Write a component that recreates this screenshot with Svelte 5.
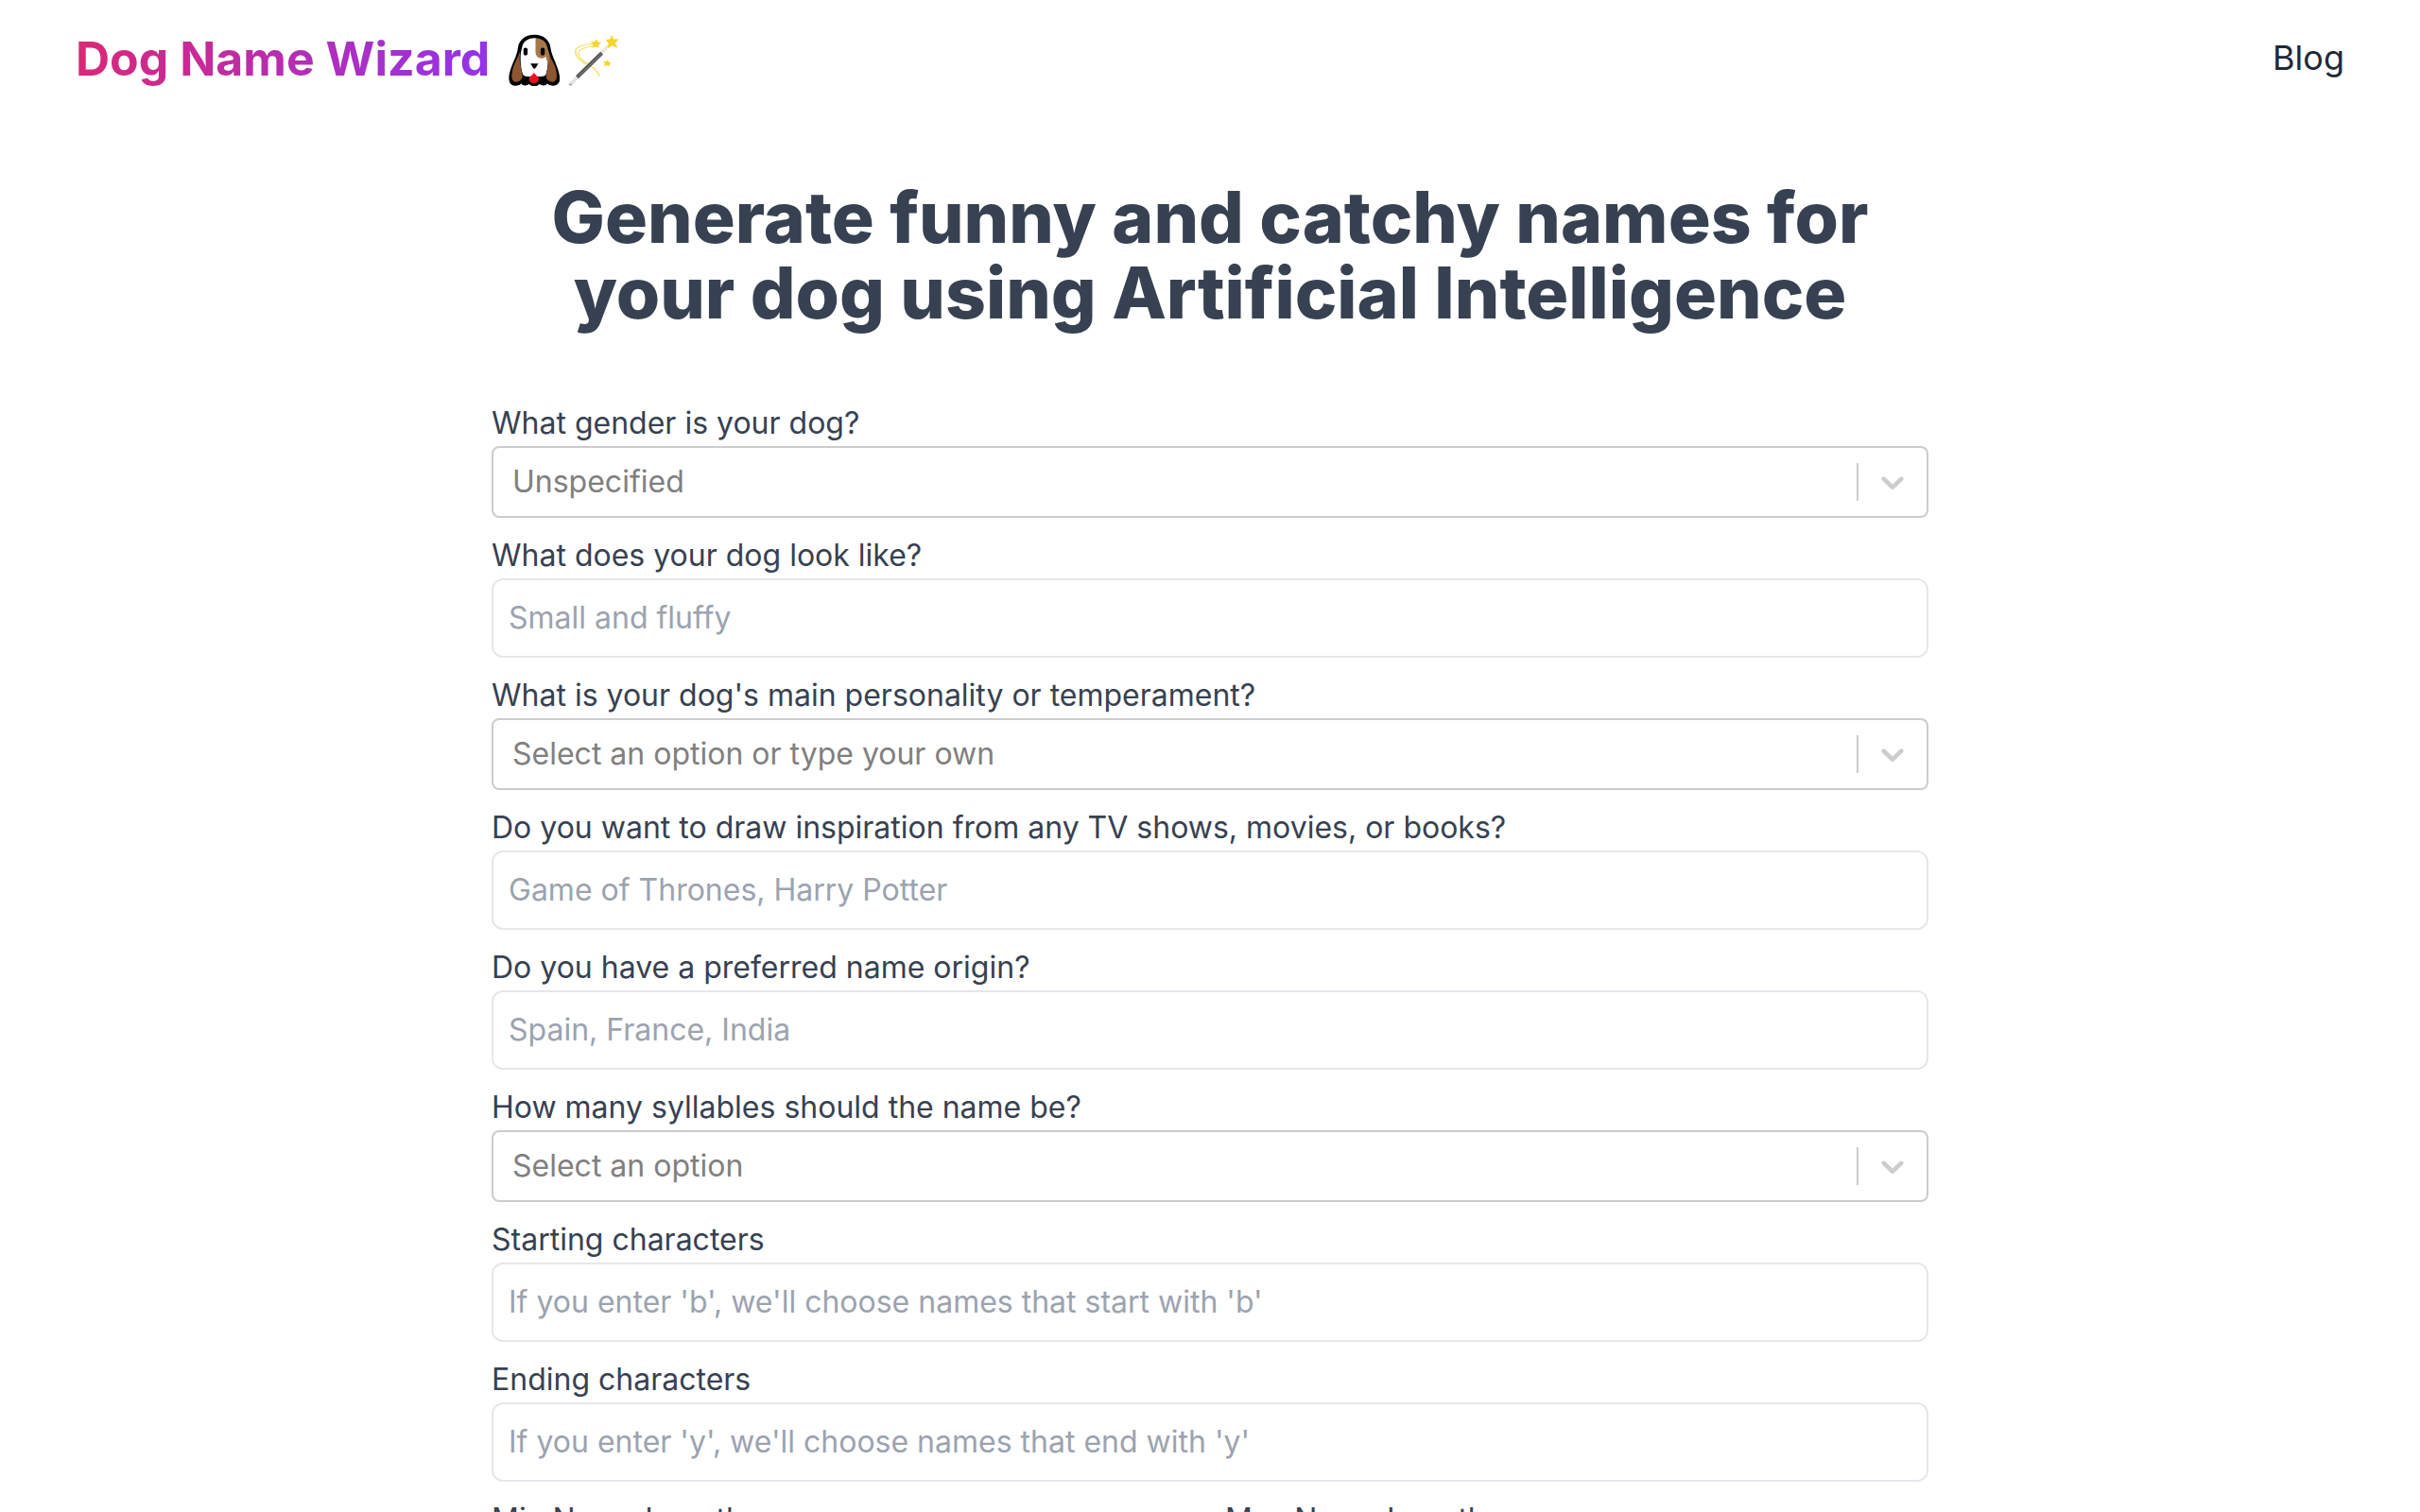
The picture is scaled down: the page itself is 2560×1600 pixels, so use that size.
<script lang="ts">
  type Field = {
    id: string;
    label: string;
    kind: 'select' | 'combo' | 'text';
    placeholder: string;
    options?: string[];
  };

  const fields: Field[] = [
    {
      id: 'gender',
      label: 'What gender is your dog?',
      kind: 'select',
      placeholder: 'Unspecified',
      options: ['Male', 'Female']
    },
    { id: 'looks', label: 'What does your dog look like?', kind: 'text', placeholder: 'Small and fluffy' },
    {
      id: 'personality',
      label: "What is your dog's main personality or temperament?",
      kind: 'combo',
      placeholder: 'Select an option or type your own'
    },
    {
      id: 'inspiration',
      label: 'Do you want to draw inspiration from any TV shows, movies, or books?',
      kind: 'text',
      placeholder: 'Game of Thrones, Harry Potter'
    },
    { id: 'origin', label: 'Do you have a preferred name origin?', kind: 'text', placeholder: 'Spain, France, India' },
    {
      id: 'syllables',
      label: 'How many syllables should the name be?',
      kind: 'select',
      placeholder: 'Select an option',
      options: ['1', '2', '3', '4']
    },
    {
      id: 'starting',
      label: 'Starting characters',
      kind: 'text',
      placeholder: "If you enter 'b', we'll choose names that start with 'b'"
    },
    {
      id: 'ending',
      label: 'Ending characters',
      kind: 'text',
      placeholder: "If you enter 'y', we'll choose names that end with 'y'"
    }
  ];

  let values: Record<string, string> = $state(Object.fromEntries(fields.map((f) => [f.id, ''])));
  let minLength = $state('');
  let maxLength = $state('');
</script>

<div class="page">
  <header>
    <a class="logo" href="/">
      <span class="logo-text">Dog Name Wizard</span>
      <span class="emoji">
        <svg viewBox="54 46 164 166" aria-hidden="true">
          <path
            d="M135 51 C106 51 88 68 86 92 C85 108 77 122 69 142 C60 164 55 184 60 196 C64 208 84 210 95 198 C100 207 112 208 119 199 C124 209 146 209 151 199 C158 208 170 207 175 198 C186 210 206 208 211 196 C215 184 210 164 201 142 C193 122 186 108 184 92 C182 68 164 51 135 51Z"
            fill="#000" stroke="#000" stroke-width="6" stroke-linejoin="round"
          />
          <path d="M139 58 C119 57 99 66 96 90 C89 110 91 150 99 172 C103 181 112 178 119 180 L151 180 C158 178 168 181 172 172 C180 150 180 110 174 90Z" fill="#fff" />
          <path d="M139 58 C160 59 175 70 177 91 C184 112 190 130 186 150 C180 150 176 130 171 116 C160 129 139 120 139 103Z" fill="#a57849" />
          <path d="M88 104 C83 122 74 134 69 149 C63 169 62 186 68 192 C79 202 95 194 98 180 C97 160 84 130 91 106Z" fill="#8d5530" />
          <path d="M180 102 C185 122 196 134 201 149 C207 169 208 186 202 192 C191 202 175 194 172 180 C173 160 187 130 180 102Z" fill="#8d5530" />
          <rect x="101" y="89" width="13" height="24" rx="6" />
          <rect x="155" y="89" width="13" height="24" rx="6" />
          <path d="M123 139 H148 L138 154 H133Z" />
          <path d="M134 166 C137 174 150 180 150 188 C147 205 121 205 118 188 C118 180 132 174 134 166Z" fill="#e81224" />
        </svg>
        <svg viewBox="244 48 164 166" aria-hidden="true">
          <g fill="none" stroke="#f4df5c" stroke-linecap="round">
            <path d="M323 79 C292 78 259 92 267 108 C270 132 302 139 319 151 C333 162 338 171 344 179" stroke-width="3" />
            <path d="M324 87 C300 87 273 97 277 111 C285 137 319 143 331 161 L341 177" stroke-width="3" />
            <path d="M268 92 C264 105 284 137 307 153" stroke-width="2" />
          </g>
          <path d="M252 205 L368 88" stroke="#d9d9d9" stroke-width="10" stroke-linecap="round" />
          <path d="M272 184 L350 108" stroke="#555759" stroke-width="12" />
          <path d="M277 181 L348 111" stroke="#77797b" stroke-width="3" />
          <path d="M252 205 L270 186" stroke="#e4e4e4" stroke-width="7" stroke-linecap="round" />
          <path d="M248 206 L255 208" stroke="#9c9c9c" stroke-width="4" stroke-linecap="round" />
          <path d="M353 105 L370 86" stroke="#f1e9ce" stroke-width="9" />
          <g fill="#f7d32f" stroke="#f7d32f" stroke-width="2" stroke-linejoin="round">
            <path d="M381 53 L387 65 L402 65 L392 76 L398 90 L383 83 L370 91 L372 76 L364 66 L377 65Z" />
            <path d="M333 65 L337 73 L347 76 L339 81 L339 91 L331 86 L322 90 L324 80 L317 73 L328 73Z" />
            <path d="M368 131 L371 136 L378 138 L373 142 L373 149 L366 145 L359 148 L361 140 L356 134 L364 135Z" />
          </g>
        </svg>
      </span>
    </a>
    <nav>
      <a class="nav-link" href="/blog">Blog</a>
    </nav>
  </header>

  <main>
    <h1>Generate funny and catchy names for your dog using Artificial Intelligence</h1>

    <form onsubmit={(e) => e.preventDefault()}>
      {#each fields as field (field.id)}
        <div class="field">
          <label for={field.id}>{field.label}</label>
          {#if field.kind === 'text'}
            <input id={field.id} class="text" type="text" placeholder={field.placeholder} bind:value={values[field.id]} />
          {:else}
            <div class="control">
              {#if field.kind === 'select'}
                <select id={field.id} bind:value={values[field.id]}>
                  <option value="">{field.placeholder}</option>
                  {#each field.options ?? [] as option}
                    <option value={option}>{option}</option>
                  {/each}
                </select>
              {:else}
                <input id={field.id} type="text" placeholder={field.placeholder} bind:value={values[field.id]} />
              {/if}
              <span class="indicator">
                <svg viewBox="0 0 20 20" aria-hidden="true">
                  <path
                    d="M4.516 7.548c0.436-0.446 1.043-0.481 1.576 0l3.908 3.747 3.908-3.747c0.533-0.481 1.141-0.446 1.574 0 0.436 0.445 0.408 1.197 0 1.615-0.406 0.418-4.695 4.502-4.695 4.502-0.217 0.223-0.502 0.335-0.787 0.335s-0.57-0.112-0.789-0.335c0 0-4.287-4.084-4.695-4.502s-0.436-1.17 0-1.615z"
                  />
                </svg>
              </span>
            </div>
          {/if}
        </div>
      {/each}

      <div class="row">
        <div class="field">
          <label for="min-length">Min Name Length</label>
          <input id="min-length" class="text" type="text" bind:value={minLength} />
        </div>
        <div class="field">
          <label for="max-length">Max Name Length</label>
          <input id="max-length" class="text" type="text" bind:value={maxLength} />
        </div>
      </div>
    </form>
  </main>
</div>

<style>
  .page {
    height: 100vh;
    overflow: hidden;
    background: #fff;
    color: #374151;
    font-family: Inter, 'Liberation Sans', sans-serif;
    font-size: 32px;
    line-height: 48px;
  }

  header {
    display: flex;
    align-items: center;
    justify-content: space-between;
    padding: 30px 80px 32px;
  }

  .logo {
    display: flex;
    align-items: center;
    gap: 20px;
    text-decoration: none;
  }

  .logo-text {
    font-size: 50px;
    font-weight: 700;
    line-height: 64px;
    color: transparent;
    background: linear-gradient(to right, #db2777, #9333ea);
    background-clip: text;
  }

  .emoji {
    display: flex;
    gap: 8px;
    padding-top: 4px;
  }

  .emoji svg {
    width: 55px;
    height: 56px;
  }

  .nav-link {
    color: #1f2937;
    font-size: 36px;
    text-decoration: none;
  }

  main {
    max-width: 1520px;
    margin: 0 auto;
    padding: 64px 32px;
  }

  h1 {
    margin: 0 0 74px;
    font-size: 75px;
    font-weight: 800;
    line-height: 80px;
    text-align: center;
    text-wrap: balance;
  }

  form {
    display: flex;
    flex-direction: column;
    gap: 16px;
  }

  .field {
    display: flex;
    flex-direction: column;
  }

  .row {
    display: grid;
    grid-template-columns: 1fr 1fr;
    gap: 32px;
  }

  input,
  select {
    box-sizing: border-box;
    width: 100%;
    min-width: 0;
    margin: 0;
    color: #374151;
    font: inherit;
    background: transparent;
    outline: none;
  }

  .text {
    height: 84px;
    padding: 14px 16px 16px;
    border: 2px solid #e5e7eb;
    border-radius: 12px;
  }

  .text::placeholder {
    color: #9ca3af;
  }

  .control {
    position: relative;
    display: flex;
    height: 72px;
    border: 2px solid #ccc;
    border-radius: 8px;
  }

  .control select,
  .control input {
    appearance: none;
    padding: 0 92px 0 20px;
    border: none;
    color: #808080;
  }

  .control input::placeholder {
    color: #808080;
  }

  /* sits over the select so the whole box stays clickable */
  .indicator {
    position: absolute;
    top: 16px;
    right: 0;
    bottom: 16px;
    display: flex;
    align-items: center;
    padding: 0 16px;
    border-left: 2px solid #ccc;
    pointer-events: none;
  }

  .indicator svg {
    width: 40px;
    height: 40px;
    fill: #ccc;
  }
</style>
